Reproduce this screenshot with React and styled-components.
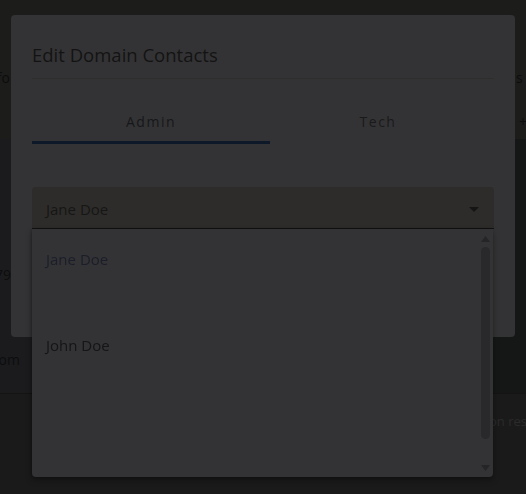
import styled, { createGlobalStyle } from "styled-components";

const GlobalStyle = createGlobalStyle`
  html, body {
    margin: 0;
    padding: 0;
    background: #1b1b1b;
    overflow: hidden;
  }
  body {
    font-family: "Open Sans", "Noto Sans", sans-serif;
  }
  * {
    box-sizing: border-box;
  }
`;

// page behind the dialog (dimmed)
const Page = styled.div`
  width: 526px;
  height: 494px;
  display: flex;
  flex-direction: column;
  font-size: 14px;
  color: #0d0d0d;
`;

const Header = styled.div`
  height: 139px;
  background: #1c1c1b;
  padding-top: 68px;
  display: flex;
  flex-direction: column;
  gap: 24px;
`;

const TextRow = styled.div`
  display: flex;
  justify-content: ${(p) => p.$justify || "space-between"};
  height: 20px;
  line-height: 20px;
`;

const CutLeft = styled.div`
  width: ${(p) => p.$width}px;
  overflow: hidden;
  white-space: nowrap;
  display: flex;
  justify-content: flex-end;
`;

const CutRight = styled.div`
  width: ${(p) => p.$width}px;
  overflow: hidden;
  white-space: nowrap;
  padding-left: ${(p) => p.$pad || 0}px;
  color: ${(p) => p.$color || "inherit"};
  font-size: ${(p) => p.$size || 14}px;
`;

const Body = styled.div`
  height: 254px;
  display: flex;
`;

const LeftPane = styled.div`
  flex: 1;
  background: #1b1b1e;
  padding-top: 126px;
  display: flex;
  flex-direction: column;
  gap: 65px;
`;

const RightPane = styled.div`
  width: 226px;
  background: #151717;
`;

const Footer = styled.div`
  flex: 1;
  background: #1a1a1a;
  border-top: 1px solid #141414;
  padding-top: 17px;
`;

// dialog
const Overlay = styled.div`
  position: fixed;
  inset: 0;
  display: flex;
  justify-content: center;
  align-items: flex-start;
  padding-top: 15px;
`;

const Dialog = styled.div`
  width: 504px;
  height: 322px;
  background: #333335;
  border-radius: 4px;
  padding: 0 21px;
`;

const Title = styled.h2`
  margin: 0;
  padding-top: 24px;
  height: 64px;
  line-height: 32px;
  font-size: 18.5px;
  font-weight: 500;
  color: #131313;
  border-bottom: 1px solid #2e2e2c;
`;

const Tabs = styled.div`
  margin-top: 18px;
  display: grid;
  grid-template-columns: 238px 1fr;
`;

const Tab = styled.div`
  padding: 15px ${(p) => (p.$active ? 0 : 8)}px 9px 0;
  line-height: 20px;
  font-size: 14px;
  font-weight: 500;
  letter-spacing: 1.5px;
  text-align: center;
  color: ${(p) => (p.$active ? "#161719" : "#1a1a1a")};
  border-bottom: 3px solid ${(p) => (p.$active ? "#0d1829" : "transparent")};
`;

const Field = styled.div`
  position: relative;
  margin-top: 43px;
`;

const SelectBox = styled.div`
  height: 42px;
  display: flex;
  align-items: center;
  justify-content: space-between;
  padding: 2px 8px 0 14px;
  background: #2d2c2a;
  border-radius: 4px 4px 0 0;
  border-bottom: 1px solid #121212;
  font-size: 15px;
  color: #161615;
`;

const Menu = styled.div`
  position: absolute;
  top: 100%;
  left: 0;
  right: 1px;
  height: 248px;
  display: flex;
  background: #333336;
  border-radius: 0 0 4px 4px;
  box-shadow: 0 3px 6px rgba(0, 0, 0, 0.35), -1px 0 3px rgba(0, 0, 0, 0.2);
`;

const List = styled.div`
  flex: 1;
  padding-top: 17px;
`;

const Item = styled.div`
  height: 86px;
  padding: 0 14px;
  line-height: 26px;
  font-size: 15px;
  color: ${(p) => (p.$selected ? "#1b1e29" : "#151517")};
`;

const Rail = styled.div`
  width: 12px;
  padding: 7px 3px 6px 0;
  display: flex;
  flex-direction: column;
  align-items: center;
`;

const Thumb = styled.div`
  width: 9px;
  height: 192px;
  margin-top: 5px;
  border-radius: 5px;
  background: #29292b;
`;

const Spacer = styled.div`
  flex: 1;
`;

function Arrow({ down }) {
  return (
    <svg width="9" height="6" viewBox="0 0 9 6">
      <path d={down ? "M0 0h9L4.5 6z" : "M4.5 0L9 6H0z"} fill="#252527" />
    </svg>
  );
}

export default function App() {
  return (
    <>
      <GlobalStyle />
      <Page>
        <Header>
          <TextRow>
            <CutLeft $width={10}>Domain Info</CutLeft>
            <CutRight $width={10}>s a</CutRight>
          </TextRow>
          <TextRow $justify="flex-end">
            <CutRight $width={10} $pad={3}>+</CutRight>
          </TextRow>
        </Header>
        <Body>
          <LeftPane>
            <TextRow $justify="flex-start">
              <CutLeft $width={11}>12579</CutLeft>
            </TextRow>
            <TextRow $justify="flex-start">
              <CutLeft $width={20}>example.com</CutLeft>
            </TextRow>
          </LeftPane>
          <RightPane />
        </Body>
        <Footer>
          <TextRow $justify="flex-end">
            <CutRight $width={37} $color="#2a2a2a" $size={13}>
              on results
            </CutRight>
          </TextRow>
        </Footer>
      </Page>

      <Overlay>
        <Dialog>
          <Title>Edit Domain Contacts</Title>
          <Tabs>
            <Tab $active>Admin</Tab>
            <Tab>Tech</Tab>
          </Tabs>
          <Field>
            <SelectBox>
              <span>Jane Doe</span>
              <svg width="24" height="24" viewBox="0 0 24 24">
                <path d="M7 10l5 5 5-5z" fill="#151515" />
              </svg>
            </SelectBox>
            <Menu>
              <List>
                <Item $selected>Jane Doe</Item>
                <Item>John Doe</Item>
              </List>
              <Rail>
                <Arrow />
                <Thumb />
                <Spacer />
                <Arrow down />
              </Rail>
            </Menu>
          </Field>
        </Dialog>
      </Overlay>
    </>
  );
}
